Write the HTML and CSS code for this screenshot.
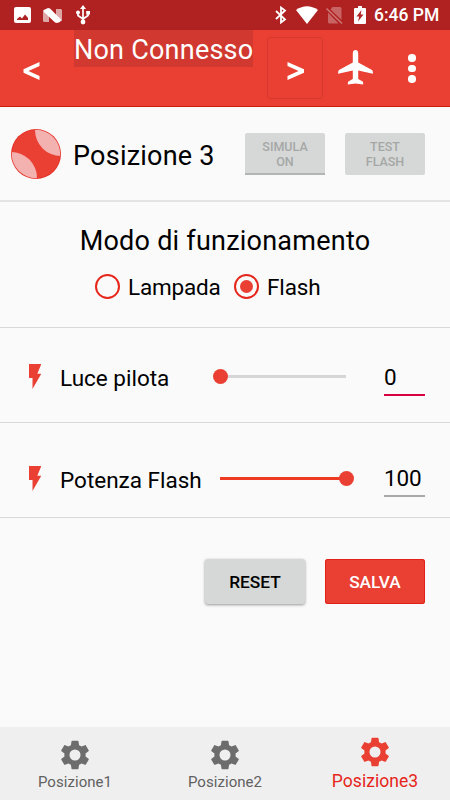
FILE: index.html
```html
<!DOCTYPE html>
<html lang="it">
<head>
<meta charset="utf-8">
<title>Posizione 3</title>
<link rel="stylesheet" href="styles.css">
</head>
<body>
<svg class="defs" width="0" height="0">
  <symbol id="gear" viewBox="0 0 24 24"><path d="M19.43 12.98c.04-.32.07-.64.07-.98s-.03-.66-.07-.98l2.11-1.65c.19-.15.24-.42.12-.64l-2-3.46c-.12-.22-.39-.3-.61-.22l-2.49 1c-.52-.4-1.08-.73-1.69-.98l-.38-2.65C14.46 2.18 14.25 2 14 2h-4c-.25 0-.46.18-.49.42l-.38 2.65c-.61.25-1.17.59-1.69.98l-2.49-1c-.23-.09-.49 0-.61.22l-2 3.46c-.13.22-.07.49.12.64l2.11 1.65c-.04.32-.07.65-.07.98s.03.66.07.98l-2.11 1.65c-.19.15-.24.42-.12.64l2 3.46c.12.22.39.3.61.22l2.49-1c.52.4 1.08.73 1.69.98l.38 2.65c.03.24.24.42.49.42h4c.25 0 .46-.18.49-.42l.38-2.65c.61-.25 1.17-.59 1.69-.98l2.49 1c.23.09.49 0 .61-.22l2-3.46c.12-.22.07-.49-.12-.64zM12 15.9a3.9 3.9 0 1 1 0-7.8 3.9 3.9 0 0 1 0 7.8z"/></symbol>
  <symbol id="bolt" viewBox="0 0 13 25"><path d="M1 0h12.300L9.300 9.800h4L4.500 25V14H1z"/></symbol>
</svg>
<div class="status">
  <svg class="st-img" width="17" height="16" viewBox="0 0 17 16"><path fill="#fff" fill-rule="evenodd" d="M2 0h13a2 2 0 0 1 2 2v12a2 2 0 0 1-2 2H2a2 2 0 0 1-2-2V2a2 2 0 0 1 2-2zM3 13h11v-2l-3-3.500-3 4-2-2-3 2.500z"/></svg>
  <svg class="st-n" width="19" height="15" viewBox="0 0 19 15"><path fill="#fff" opacity=".6" d="M0 2l6-1v13H1l-1-1zM13 1h5l1 1v11l-6 1z"/><path fill="#fff" d="M1 2L5 0l2 .5 11 11-1 2.500-3 1-2-.5L1 4z"/></svg>
  <svg class="st-usb" width="14" height="20" viewBox="0 0 14 20"><g fill="none" stroke="#fff" stroke-width="1.700"><path d="M7 3v14M2 8v2.500L7 14M12 8v2.500L7 14"/></g><path fill="#fff" d="M7 0l3 4H4z"/><circle cx="2" cy="7.500" r="2" fill="#fff"/><path fill="#fff" d="M10.200 6H14v3.500h-3.800z"/><circle cx="7" cy="17" r="2.400" fill="#fff"/></svg>
  <span class="grow"></span>
  <svg class="st-bt" width="12" height="18" viewBox="0 0 12 18"><path fill="none" stroke="#fff" stroke-width="1.800" d="M1 5l9 8.500L6 16.500v-15l4 3-9 8.500"/></svg>
  <svg class="st-wifi" width="22" height="18" viewBox="0 0 22 18"><path fill="#fff" d="M0 4Q11-3.500 22 4L11 18z"/></svg>
  <svg class="st-sim" width="17" height="17" viewBox="0 0 17 17"><path fill="#fff" opacity=".3" d="M6.500 0H14q1.500 0 1.500 1.500V13L4.500 2.500zM2 5.500L12.500 16.500H3.500Q2 16.500 2 15z"/><path stroke="#fff" opacity=".4" stroke-width="1.400" d="M.5 1.500l15.500 15"/></svg>
  <svg class="st-bat" width="12" height="18" viewBox="0 0 12 18"><path fill="#fff" d="M4 0h4v2h3q1 0 1 1v14q0 1-1 1H1q-1 0-1-1V3q0-1 1-1h3z"/><path fill="#b02121" d="M7.500 4L2.500 10.500h2.700L4 15.500l5.500-7H6.700z"/></svg>
  <span class="clock">6:46 PM</span>
</div>
<header class="bar">
  <svg class="prev" width="18" height="19" viewBox="0 0 18 19"><path fill="#fff" d="M16.500 0v4L5.500 9l11 5v4L.500 10.800V7.200z"/></svg>
  <div class="title">Non Connesso</div>
  <div class="next"><svg width="18" height="19" viewBox="0 0 18 19"><path fill="#fff" d="M.500 0v4l11 5-11 5v4l16.500-7.200V7.200z"/></svg></div>
  <svg class="plane" width="35" height="35" viewBox="0 0 35 35"><path fill="#fff" d="M17.500 0Q20 0 20.200 3v9.500L34 20q1 .7 1 3.800l-14.800-3.300v8.500l4.500 2.500q.5.500.5 3L17.500 33.500 9.800 34.500q0-2.500.5-3l4.500-2.500v-8.500L0 23.800Q0 20.700 1 20l13.800-7.500V3Q15 0 17.500 0z"/></svg>
  <div class="dots"><i></i><i></i><i></i></div>
</header>
<main>
  <section class="pos">
    <svg class="ball" width="50" height="50" viewBox="0 0 50 50"><defs><clipPath id="disc"><circle cx="25" cy="25" r="24.200"/></clipPath></defs><circle cx="25" cy="25" r="25" fill="#e53128"/><circle cx="25" cy="25" r="24" fill="#ea4034"/><g clip-path="url(#disc)" fill="#f3b2b0"><circle cx="50" cy="1" r="26"/><circle cx="0" cy="49" r="26"/></g></svg>
    <h1>Posizione 3</h1>
    <div class="mini under">SIMULA<br>ON</div>
    <div class="mini">TEST<br>FLASH</div>
  </section>
  <section class="mode">
    <h2>Modo di funzionamento</h2>
    <div class="radios"><span class="radio"></span><span class="rl first">Lampada</span><span class="radio on"></span><span class="rl">Flash</span></div>
  </section>
  <section class="row">
    <svg class="bolt" width="13" height="25"><use href="#bolt"/></svg>
    <span class="label">Luce pilota</span>
    <div class="track"><i class="knob"></i></div>
    <div class="value focus">0</div>
  </section>
  <section class="row second">
    <svg class="bolt" width="13" height="25"><use href="#bolt"/></svg>
    <span class="label">Potenza Flash</span>
    <div class="track full"><i class="knob"></i></div>
    <div class="value">100</div>
  </section>
  <div class="actions"><div class="btn">RESET</div><div class="btn primary">SALVA</div></div>
</main>
<nav>
  <div class="tab"><svg width="34" height="34"><use href="#gear"/></svg><span>Posizione1</span></div>
  <div class="tab"><svg width="34" height="34"><use href="#gear"/></svg><span>Posizione2</span></div>
  <div class="tab active"><svg width="34" height="34"><use href="#gear"/></svg><span>Posizione3</span></div>
</nav>
</body>
</html>
```
FILE: styles.css
```css
* { box-sizing: border-box; }
body { margin: 0; width: 450px; height: 800px; display: flex; flex-direction: column; background: #fafafa; color: #000; font-family: Roboto, sans-serif; overflow: hidden; }
svg { display: block; flex: none; }
.defs { position: absolute; }
.status { height: 30px; flex: none; display: flex; align-items: center; background: #b02121; padding: 0 11px 0 14px; }
.st-n { margin-left: 12px; }
.st-usb { margin-left: 14px; }
.grow { flex: 1; }
.st-wifi { margin-left: 9px; }
.st-sim { margin-left: 8px; }
.st-bat { margin-left: 11px; }
.clock { color: #fff; font-size: 17.500px; font-weight: 500; line-height: 32px; margin-left: 8px; white-space: nowrap; width: 65px; }
.bar { height: 77px; flex: none; display: flex; align-items: flex-start; background: #ea4034; border-bottom: 1px solid #c8200c; }
.prev { margin: 32px 0 0 22.500px; }
.title { margin-left: 33.500px; width: 179px; height: 37px; line-height: 40px; font-size: 27px; letter-spacing: .23px; color: #fff; background: #d1382f; white-space: nowrap; }
.next { margin: 7px 0 0 14px; width: 56px; height: 62px; border: 1px solid #d7382e; border-radius: 3px; padding: 24px 0 0 19px; }
.plane { margin: 20px 0 0 15px; }
.dots { margin: 24px 0 0 35px; display: grid; gap: 3px; }
.dots i { width: 7.500px; height: 7.500px; border-radius: 50%; background: #fff; }
main { flex: 1; }
section { border-bottom: 1px solid #d9d9d9; }
.pos { height: 95px; border-bottom: 2px solid #e4e4e4; display: flex; align-items: center; padding: 1px 25px 0 11px; }
h1, h2 { margin: 0; font-weight: 400; font-size: 27px; line-height: 32px; letter-spacing: .23px; white-space: nowrap; }
h1 { width: 172px; margin-left: 12px; margin-top: 4px; }
.mini { width: 80px; height: 42px; background: #d6d8d7; color: #a5a7a6; border-radius: 2px; font-size: 12.500px; line-height: 14.500px; font-weight: 500; text-align: center; padding-top: 7px; }
.mini.under { margin-right: 20px; border-bottom: 2px solid #b3b5b4; border-radius: 2px 2px 0 0; }
.mode { height: 126px; }
h2 { text-align: center; padding-top: 23px; }
.radios { display: flex; align-items: center; margin: 15.500px 0 0 95px; height: 28px; }
.radio { width: 25px; height: 25px; border: 2px solid #e6261b; border-radius: 50%; display: grid; place-items: center; }
.radio.on::after { content: ""; width: 13px; height: 13px; border-radius: 50%; background: #ea4034; }
.rl { font-size: 22.500px; letter-spacing: -.1px; margin: 1px 0 0 8px; white-space: nowrap; }
.rl.first { width: 106px; letter-spacing: -.2px; }
.row { height: 95px; display: flex; align-items: center; padding: 3px 25px 0 28px; }
.second { padding-top: 17px; }
.bolt { fill: #ea4034; }
.label { font-size: 22.500px; width: 160px; margin: 2px 0 0 19px; white-space: nowrap; }
.track { width: 126px; height: 3px; background: #d6d6d6; display: flex; align-items: center; }
.full { background: #ee3a22; justify-content: flex-end; }
.knob { width: 15px; height: 15px; flex: none; border-radius: 50%; background: #ea4034; margin: 0 -7.500px; }
.value { width: 41px; margin-left: 38px; font-size: 22.500px; letter-spacing: -.1px; line-height: 36px; height: 37px; margin-top: 2px; border-bottom: 2px solid #a8a8a8; }
.second .value { margin-top: 0; }
.focus { border-bottom-color: #d9003f; }
.actions { display: flex; gap: 20px; justify-content: flex-end; padding: 41px 25px 0 0; }
.btn { width: 100px; height: 45px; line-height: 47px; font-size: 17.300px; font-weight: 500; text-align: center; background: #d6d8d7; border-radius: 3px; box-shadow: 0 1px 3px rgba(0,0,0,.4); }
.primary { background: #ea4034; color: #fff; box-shadow: inset 0 0 0 1px #e32118; }
nav { height: 73px; flex: none; display: flex; background: #efefef; }
.tab { flex: 1; display: flex; flex-direction: column; align-items: center; padding-top: 11px; fill: #6d6d6d; color: #616161; font-size: 15px; letter-spacing: .05px; line-height: 21px; }
.active { padding-top: 8px; fill: #ea4034; color: #e6261b; font-size: 17.500px; line-height: 25px; }
```
